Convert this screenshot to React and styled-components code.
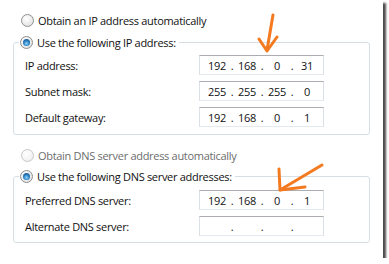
import React from 'react'
import styled, { createGlobalStyle } from 'styled-components'

const GlobalStyle = createGlobalStyle`
    html, body {
        margin: 0;
        padding: 0;
        background: #ffffff;
    }
    body {
        font-family: "Open Sans", "Liberation Sans", Arial, sans-serif;
        font-size: 11px;
        letter-spacing: -0.3px;
        color: #111111;
    }
`;

const Frame = styled.div`
    position: relative;
    width: 383px;
    height: 258px;
    box-sizing: border-box;
    background: #ffffff;
    padding-top: 12px;
    box-shadow: 3px 3px 2px rgba(0, 0, 0, 0.7);
`;

const RadioRow = styled.div`
    display: flex;
    align-items: center;
    gap: 4px;
    height: 16px;
    padding-left: ${p => p.$inLegend ? '1px' : '21px'};
    padding-right: ${p => p.$inLegend ? '3px' : '0'};
    margin-top: ${p => p.$top || 0}px;
    color: ${p => p.$disabled ? '#6d6d6d' : '#111111'};
    white-space: nowrap;
`;

const Radio = styled.span`
    position: relative;
    flex: none;
    width: 11px;
    height: 11px;
    border-radius: 50%;
    border: 1px solid ${p => p.$disabled ? '#c8c8c8' : '#8d8f91'};
    background: ${p => p.$disabled
        ? 'radial-gradient(circle at 40% 35%, #ffffff 0%, #f1f1f1 70%)'
        : 'radial-gradient(circle at 40% 35%, #ffffff 0%, #e4e4e4 75%, #d6d6d6 100%)'};

    &::after {
        content: '';
        display: ${p => p.$checked ? 'block' : 'none'};
        position: absolute;
        left: 2px;
        top: 2px;
        width: 7px;
        height: 7px;
        border-radius: 50%;
        background: radial-gradient(circle at 50% 65%, #8fd4f7 0%, #2b83c6 45%, #0d3f78 100%);
    }
`;

const Group = styled.fieldset`
    margin: ${p => p.$top || 0}px 0 0 13px;
    width: 357px;
    box-sizing: border-box;
    border: 1px solid #d5dfe5;
    border-radius: 3px;
    padding: ${p => p.$padTop}px 45px ${p => p.$padBottom}px 11px;
    min-width: 0;
`;

const Legend = styled.legend`
    padding: 0;
    margin-left: -6px;
`;

const Rows = styled.div`
    display: flex;
    flex-direction: column;
    gap: 6px;
`;

const FieldRow = styled.div`
    display: grid;
    grid-template-columns: 174px 125px;
    align-items: center;
    height: 20px;
`;

const Label = styled.span`
    white-space: nowrap;
`;

const IpBox = styled.div`
    display: flex;
    align-items: center;
    box-sizing: border-box;
    height: 20px;
    width: 125px;
    padding-left: 4px;
    border: 1px solid #dbdfe6;
    border-top-color: #abadb3;
    border-bottom-color: #e3e9ef;
    background: #ffffff;
`;

const Octet = styled.span`
    width: 26px;
    text-align: center;
`;

const Dot = styled.span`
    width: 4px;
    text-align: center;
`;

const Annotations = styled.svg`
    position: absolute;
    left: 0;
    top: 0;
    pointer-events: none;
`;

function IpField({ value }) {
    const parts = value ? value.split('.') : ['', '', '', '']
    return (
        <IpBox>
            <Octet>{parts[0]}</Octet>
            <Dot>.</Dot>
            <Octet>{parts[1]}</Octet>
            <Dot>.</Dot>
            <Octet>{parts[2]}</Octet>
            <Dot>.</Dot>
            <Octet>{parts[3]}</Octet>
        </IpBox>
    )
}

export default function App() {
    return (
        <>
            <GlobalStyle />
            <Frame>
                <RadioRow>
                    <Radio />
                    <span>Obtain an IP address automatically</span>
                </RadioRow>
                <Group $top={6} $padTop={5} $padBottom={7}>
                    <Legend>
                        <RadioRow $inLegend>
                            <Radio $checked />
                            <span>Use the following IP address:</span>
                        </RadioRow>
                    </Legend>
                    <Rows>
                        <FieldRow>
                            <Label>IP address:</Label>
                            <IpField value="192.168.0.31" />
                        </FieldRow>
                        <FieldRow>
                            <Label>Subnet mask:</Label>
                            <IpField value="255.255.255.0" />
                        </FieldRow>
                        <FieldRow>
                            <Label>Default gateway:</Label>
                            <IpField value="192.168.0.1" />
                        </FieldRow>
                    </Rows>
                </Group>
                <RadioRow $top={12} $disabled>
                    <Radio $disabled />
                    <span>Obtain DNS server address automatically</span>
                </RadioRow>
                <Group $top={5} $padTop={6} $padBottom={6}>
                    <Legend>
                        <RadioRow $inLegend>
                            <Radio $checked />
                            <span>Use the following DNS server addresses:</span>
                        </RadioRow>
                    </Legend>
                    <Rows>
                        <FieldRow>
                            <Label>Preferred DNS server:</Label>
                            <IpField value="192.168.0.1" />
                        </FieldRow>
                        <FieldRow>
                            <Label>Alternate DNS server:</Label>
                            <IpField />
                        </FieldRow>
                    </Rows>
                </Group>
                <Annotations width="383" height="258" viewBox="0 0 383 258">
                    <g fill="none" stroke="#f47a20" strokeWidth="3" strokeLinecap="round" strokeLinejoin="round">
                        <path d="M273 15 L267 50" />
                        <path d="M259 39 L267 51 L277 37" />
                        <path d="M322 165 L280 190" />
                        <path d="M279 169 L280 190 L305 187" />
                    </g>
                </Annotations>
            </Frame>
        </>
    )
}
